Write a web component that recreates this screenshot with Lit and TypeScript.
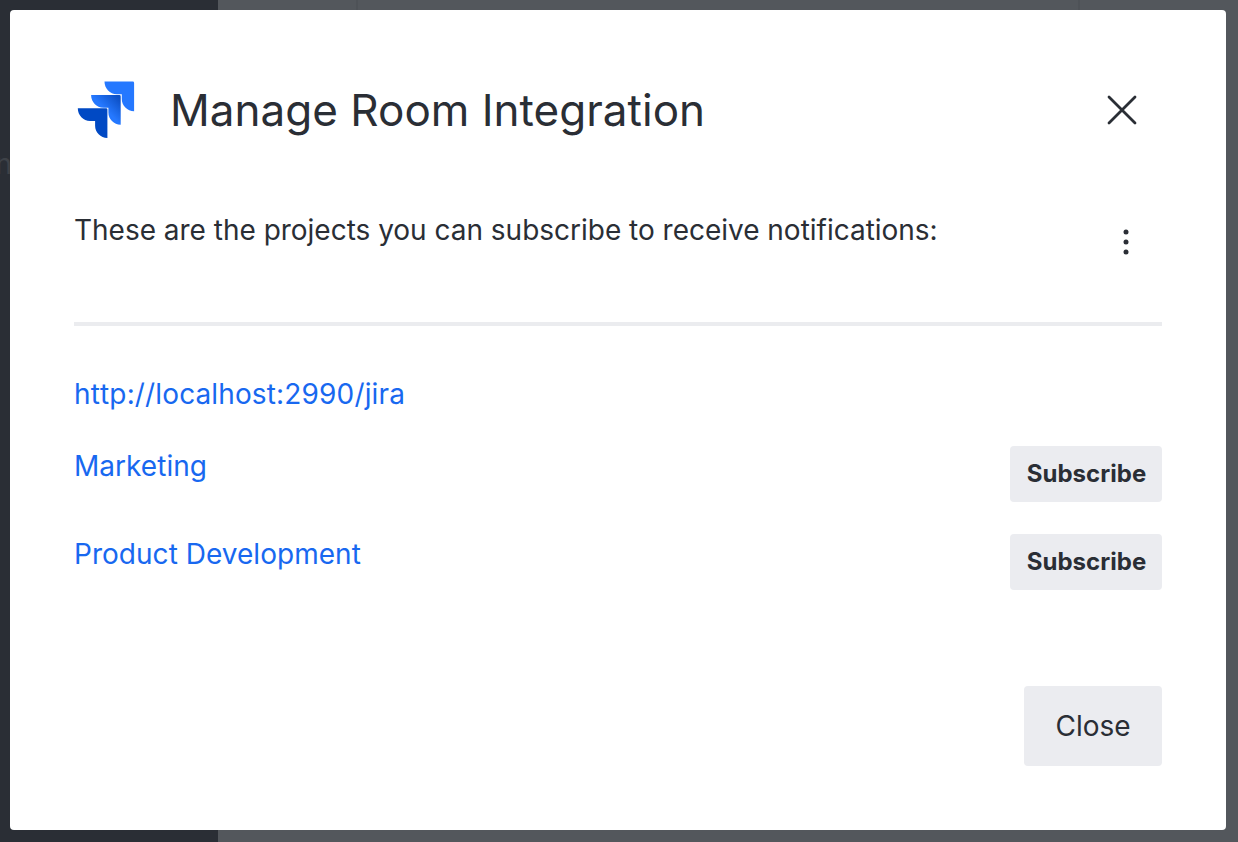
import { LitElement, html, css, svg } from "lit";
import { customElement } from "lit/decorators.js";

const chevron = "M0 0H28.3Q29.6 0 29.6 1.3V29.6C22.8 29.6 17.3 24.1 17.3 17.4V12.7H12.3C5.5 12.7 0 7 0 0Z";

@customElement("app-root")
export class AppRoot extends LitElement {
  static styles = css`
    :host { display: block; }
    * { box-sizing: border-box; }
    .backdrop {
      position: relative;
      width: 1238px; height: 842px; overflow: hidden; padding: 10px 12px 12px 10px;
      background: linear-gradient(90deg, #2a2e35 218px, #53575c 218px);
      font-family: Inter, sans-serif; color: #2a2e35;
    }
    .rule { position: absolute; top: 0; width: 2px; height: 10px; background: #4e5257; }
    .rule.a { left: 356px; }
    .rule.b { left: 1078px; }
    .behind { position: absolute; left: -4.5px; top: 144px; font-size: 28px; line-height: 40px; color: #3e4248; }
    .modal {
      position: relative; height: 820px; background: #fff; border-radius: 4px;
      padding: 64px 64px 64px; display: flex; flex-direction: column;
    }
    header { display: flex; align-items: center; height: 72px; }
    .logo { width: 64px; height: 64px; display: block; }
    h1 { margin: 0 0 0 32px; flex: 1; font-size: 44px; font-weight: 400; line-height: 64px; letter-spacing: 0.02px; white-space: nowrap; }
    .x { width: 32px; height: 32px; margin-right: 24px; display: block; }
    .intro { display: flex; justify-content: space-between; margin-top: 64px; height: 112px; font-size: 28px; line-height: 40px; letter-spacing: -0.015px; }
    .intro p { margin: 0; }
    .dots { width: 32px; height: 32px; margin: 16px 20px 0 0; display: block; }
    .divider { height: 4px; background: #ebecef; flex: none; }
    a { color: #1868f0; text-decoration: none; font-size: 28px; line-height: 40px; letter-spacing: 0.03px; }
    .url { margin-top: 48px; height: 72px; }
    .url a { font-kerning: none; letter-spacing: 0.155px; }
    .row { display: flex; justify-content: space-between; height: 88px; }
    button { border: 0; border-radius: 4px; background: #ebecf0; color: #2a2e35; font-family: inherit; padding: 0; }
    .sub { width: 152px; height: 56px; font-size: 24px; font-weight: 700; line-height: 32px; padding-left: 1px; letter-spacing: 0.05px; }
    footer { display: flex; justify-content: flex-end; margin-top: 64px; }
    .close { width: 138px; height: 80px; font-size: 28px; line-height: 40px; font-weight: 400; }
  `;

  projects = ["Marketing", "Product Development"];

  render() {
    return html`
      <div class="backdrop">
        <div class="rule a"></div>
        <div class="rule b"></div>
        <div class="behind">n</div>
        <div class="modal">
          <header>
            <svg class="logo" viewBox="0 0 64 64">
              <defs>
                <linearGradient id="mid" gradientUnits="userSpaceOnUse" x1="29" y1="1" x2="15" y2="15">
                  <stop offset=".1" stop-color="#0c4fc4" /><stop offset="1" stop-color="#2578ff" />
                </linearGradient>
              </defs>
              ${svg`<path transform="translate(30.5 3.6)" fill="#2578ff" d=${chevron} />
              <path transform="translate(17.1 17.1)" fill="url(#mid)" d=${chevron} />
              <path transform="translate(3.8 30.3)" fill="#0049c4" d=${chevron} />`}
            </svg>
            <h1>Manage Room Integration</h1>
            <svg class="x" viewBox="0 0 32 32" fill="none" stroke="#2a2e35" stroke-width="2.8" stroke-linecap="round">
              <path d="M3 3L29 29M29 3L3 29" />
            </svg>
          </header>
          <div class="intro">
            <p>These are the projects you can subscribe to receive notifications:</p>
            <svg class="dots" viewBox="0 0 32 32" fill="#2a2e35">
              <circle cx="16" cy="6" r="2.5" /><circle cx="16" cy="16" r="2.5" /><circle cx="16" cy="26" r="2.5" />
            </svg>
          </div>
          <div class="divider"></div>
          <div class="url"><a>http://localhost:2990/jira</a></div>
          ${this.projects.map((p) => html`<div class="row"><a>${p}</a><button class="sub">Subscribe</button></div>`)}
          <footer><button class="close">Close</button></footer>
        </div>
      </div>
    `;
  }
}
